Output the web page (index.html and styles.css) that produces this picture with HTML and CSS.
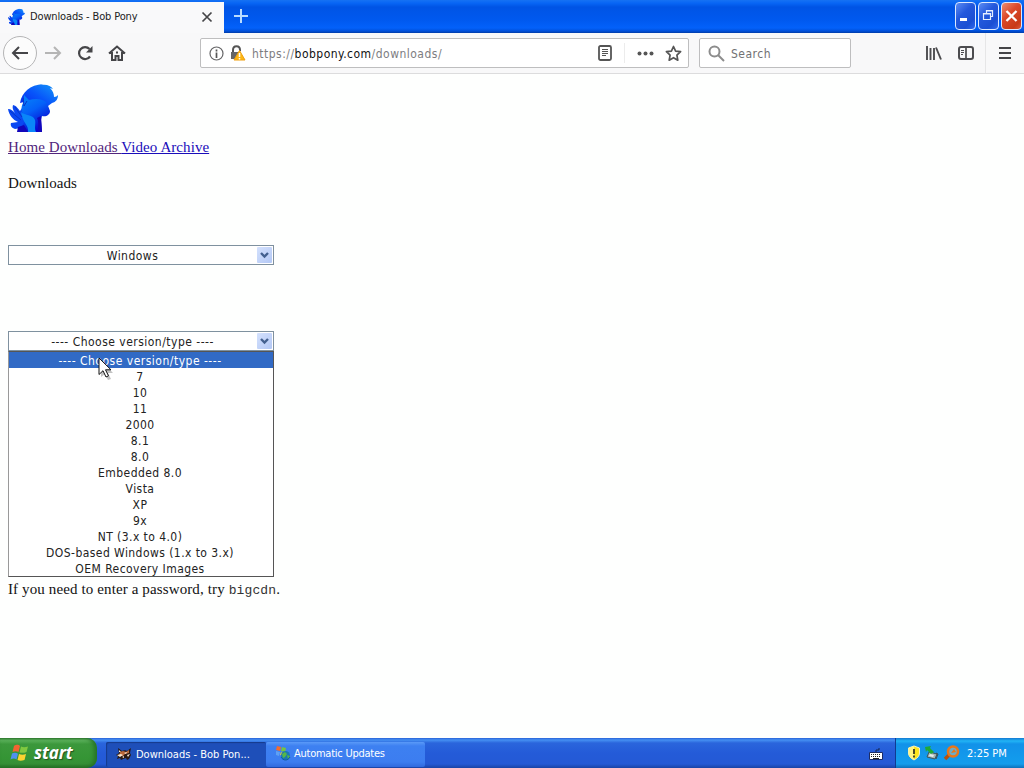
FILE: index.html
```html
<!DOCTYPE html>
<html lang="en">
<head>
    <meta charset="UTF-8">
    <meta name="viewport" content="width=device-width, initial-scale=1.0">
    <title>Downloads - Bob Pony</title>
    <link rel="stylesheet" href="styles.css">
</head>
<body>
    <svg class="defs" width="0" height="0">
        <defs>
            <linearGradient id="mane" x1="0" y1="1" x2="1" y2="0">
                <stop offset="0" stop-color="#0820e8"/>
                <stop offset=".5" stop-color="#0754fa"/>
                <stop offset="1" stop-color="#159cf8"/>
            </linearGradient>
            <linearGradient id="coat" x1="0" y1="0" x2=".5" y2="1">
                <stop offset="0" stop-color="#078af9"/>
                <stop offset=".5" stop-color="#0460f8"/>
                <stop offset="1" stop-color="#0802cf"/>
            </linearGradient>
            <symbol id="pony" viewBox="0 0 50 50">
                <path fill="url(#mane)" d="M12 21C14 10 22 3 35 2l-2 1c6-1 10 1 12 4l-3-1c3 3 4 6 4 9 2 0 3-1 4-2 0 4-2 7-6 8l-4 3-20 4-4-8z"/>
                <path fill="#0a48f2" d="M0 27c3 0 5 2 7 4-2-3-3-5-2-8 4 1 5 4 7 6l4-6 5 12-3 15H10l3-4-6 1c-3-1-5-3-4-6l7-1c-5-2-9-7-10-13z"/>
                <path fill="url(#coat)" d="M16 13l5 5c7-2 15-1 18 3l3 8c0 4-4 6-8 5l-1 4 1 12H11l4-8c4-4 2-8-1-12-1-5 0-8 2-10z"/>
                <path fill="#0a86f8" d="M13 30c4 4 12 2 14 8 1 4-1 8 1 12h-8c1-7-6-10-7-20z"/>
                <path fill="#1206ba" d="M29 36c2 4 1 9 1 14h4l-1-16zM10 45l6-2 4 7H9z"/>
                <path fill="none" stroke="#0636c9" d="M15 16l1 8 3-5M2 29l11 9M7 25l7 10"/>
            </symbol>
        </defs>
    </svg>

    <div class="titlebar">
        <div class="tab">
            <svg class="tab-icon" width="17" height="17"><use href="#pony"/></svg>
            <span class="tab-title">Downloads - Bob Pony</span>
            <svg width="12" height="12" viewBox="0 0 12 12"><path d="M1.5 1.5l9 9m0-9l-9 9" stroke="#454548" stroke-width="1.7"/></svg>
        </div>
        <svg class="new-tab" width="14" height="14" viewBox="0 0 14 14"><path d="M7 0v14M0 7h14" stroke="#b9dcff" stroke-width="2"/></svg>
        <div class="window-buttons">
            <div class="win-button"><svg width="19" height="26"><path d="M4 16.5h7" stroke="#fff" stroke-width="3"/></svg></div>
            <div class="win-button"><svg width="19" height="26" fill="none" stroke="#e6efff"><path d="M4.5 10.500h7v6h-7zM4 11h8M7.500 10V7.500h6v6H12M7 8h7" stroke-width="1.200"/></svg></div>
            <div class="win-button close"><svg width="19" height="26"><path d="M4.500 8l10 10m0-10l-10 10" stroke="#fff" stroke-width="2.300"/></svg></div>
        </div>
    </div>

    <div class="toolbar">
        <div class="back">
            <svg width="18" height="16" viewBox="0 0 18 16" fill="none" stroke="#454548" stroke-width="2"><path d="M17 8H2M8 2L2 8l6 6"/></svg>
        </div>
        <svg class="forward" width="18" height="16" viewBox="0 0 18 16" fill="none" stroke="#b5b5b5" stroke-width="2"><path d="M1 8h15M10 2l6 6-6 6"/></svg>
        <svg class="reload" width="16" height="16" viewBox="0 0 16 16"><path d="M13 11.500A6 6 0 1 1 12.500 4" fill="none" stroke="#454548" stroke-width="2.200"/><path d="M15.500 1v6.500H9z" fill="#454548"/></svg>
        <svg class="home" width="18" height="16" viewBox="0 0 18 16"><path d="M1 8.500L9 1.500l8 7M4 7v8h3.500v-4h3v4H14V7" fill="none" stroke="#454548" stroke-width="2"/><path d="M8 6.500h2v2H8z" fill="#454548"/></svg>

        <div class="url-bar">
            <svg width="15" height="15" viewBox="0 0 15 15"><circle cx="7.500" cy="7.500" r="6.500" fill="none" stroke="#656567" stroke-width="1.200"/><path d="M7.500 6.500V12M7.500 3.500v2" stroke="#555" stroke-width="1.700"/></svg>
            <svg class="lock" width="16" height="16" viewBox="0 0 16 16"><path d="M3 8V5c0-5 7-5 7 0v1" fill="none" stroke="#555" stroke-width="2"/><path d="M1 7h8v7H1z" fill="#666"/><path d="M9.500 5.500L15 15H4z" fill="#fdb714" stroke="#ef9f10" stroke-linejoin="round"/><path d="M9.500 8v4m0 1v1.500" stroke="#fff" stroke-width="1.500"/></svg>
            <span class="url">https://<b>bobpony.com</b>/downloads/</span>
            <svg class="reader" width="14" height="16" viewBox="0 0 14 16" fill="none" stroke="#555"><rect x="1" y="1" width="12" height="14" rx="1.500" stroke-width="1.800"/><path d="M4 4.500h6M4 6.500h6M4 8.500h6M4 10.500h4"/></svg>
            <i class="divider"></i>
            <svg class="dots" width="17" height="5" viewBox="0 0 17 5" fill="#555"><circle cx="2.500" cy="2.500" r="2"/><circle cx="8.500" cy="2.500" r="2"/><circle cx="14.500" cy="2.500" r="2"/></svg>
            <svg class="star" width="17" height="17" viewBox="0 0 17 17"><path d="M8.500 1.500l2.100 4.600 5 .6-3.700 3.500.9 5-4.300-2.500-4.300 2.500.9-5-3.700-3.500 5-.6z" fill="none" stroke="#555" stroke-width="1.700" stroke-linejoin="round"/></svg>
        </div>

        <div class="search-bar">
            <svg width="17" height="17" viewBox="0 0 17 17" fill="none" stroke="#8c8c8c" stroke-width="2"><circle cx="6.500" cy="6.500" r="5"/><path d="M10 10l6 6"/></svg>
            <span class="search-text">Search</span>
        </div>

        <svg class="library" width="16" height="14" viewBox="0 0 16 14" fill="none" stroke="#4c4c4f" stroke-width="1.900"><path d="M1 0v14M4.500 2v12M8 2v12M10 1.500l5 12"/></svg>
        <svg class="sidebar" width="16" height="14" viewBox="0 0 16 14" fill="none" stroke="#4c4c4f"><rect x="1" y="1" width="14" height="12" rx="2" stroke-width="2"/><path d="M8 1v12" stroke-width="1.700"/><path d="M3 4.500h3M3 6.500h3M3 8.500h2"/></svg>
        <i class="menu-divider"></i>
        <svg class="menu" width="12" height="12" viewBox="0 0 12 12" stroke="#454548" stroke-width="2"><path d="M0 1h12M0 6h12M0 11h12"/></svg>
    </div>

    <div class="page">
        <svg class="logo" width="50" height="50"><use href="#pony"/></svg>
        <div class="links"><a class="visited" href="#">Home </a><a class="visited" href="#">Downloads </a><a href="#">Video Archive</a></div>
        <p class="heading">Downloads</p>

        <div class="select">
            <span class="value">Windows</span>
            <span class="arrow"><svg width="9" height="7" viewBox="0 0 9 7"><path d="M1 1l3.500 3.500L8 1" fill="none" stroke="#43608f" stroke-width="2.400"/></svg></span>
        </div>

        <div class="select version">
            <span class="value">---- Choose version/type ----</span>
            <span class="arrow"><svg width="9" height="7" viewBox="0 0 9 7"><path d="M1 1l3.500 3.500L8 1" fill="none" stroke="#43608f" stroke-width="2.400"/></svg></span>
            <ul class="options">
                <li class="selected">---- Choose version/type ----</li>
                <li>7</li>
                <li>10</li>
                <li>11</li>
                <li>2000</li>
                <li>8.1</li>
                <li>8.0</li>
                <li>Embedded 8.0</li>
                <li>Vista</li>
                <li>XP</li>
                <li>9x</li>
                <li>NT (3.x to 4.0)</li>
                <li>DOS-based Windows (1.x to 3.x)</li>
                <li>OEM Recovery Images</li>
            </ul>
            <svg class="cursor" width="16" height="24" viewBox="0 0 16 24"><path d="M3 3v17l4-3 3 6 3-1-3-6h5z" fill="#777" opacity=".45"/><path d="M1 1v16.500l4-3.800 3 6.300 2.500-1.200-3-6H13z" fill="#fff" stroke="#111"/></svg>
        </div>

        <p class="password">If you need to enter a password, try <code>bigcdn</code>.</p>
    </div>

    <div class="taskbar">
        <div class="start">
            <svg width="20" height="20" viewBox="0 0 20 20"><path d="M4 3c3-2 5-1 6 0L8.500 9c-2-1-4-1-6 0z" fill="#f36431"/><path d="M11 3.500c2 1 4 1 7 0L16.500 9c-2 1-5 1-7 .5z" fill="#80c840"/><path d="M2 10.500c2-1 4-1 6 .200L6.500 16.500c-2-1.500-4-1-6 0z" fill="#4f91ee"/><path d="M9 11c2 1 5 1 7 0l-1.500 6c-3 1-5 1-7 0z" fill="#fbd331"/></svg>
            <span>start</span>
        </div>
        <div class="task active">
            <svg width="16" height="16" viewBox="0 0 16 16"><path d="M2 2l4 3c2-1 4-1 5 0l4-3-1 5 1 2-2 4-2 1-1-2-3 1-2 1-1-2-3 1 1-3-2-1 3-2z" fill="#2a1a14"/><path d="M4 6l3-1 3 1 3-2 0 3-4 1-2 2-4 0z" fill="#b9683a"/><path d="M1 9l4-1 2 1-3 2zM8 7l3-1-1 2zM3 4l2 2H3zM11 9l3-1-2 3zM6 11l2-1v2z" fill="#f7e6d4"/></svg>
            <span>Downloads - Bob Pon...</span>
        </div>
        <div class="task updates">
            <svg width="16" height="16" viewBox="0 0 16 16"><path d="M2 1l4 1-1 4-4-1z" fill="#f36b2e"/><path d="M7 2l4 1-1 4-4-1z" fill="#76c442"/><path d="M1 6l4 1-1 4-3-1z" fill="#5da0f5"/><path d="M6 7l4 1-1 3-4-1z" fill="#f5cd33"/><circle cx="10.500" cy="10.500" r="4.500" fill="#1b79b0"/><path d="M7 9l3-2 2 2-2 3-2 1zM12 10l3 1-2 3z" fill="#55b747"/><path d="M6 12c2 4 7 4 9 0" fill="none" stroke="#135a9c"/></svg>
            <span>Automatic Updates</span>
        </div>
        <svg class="keyboard" width="14" height="14" viewBox="0 0 14 14"><path d="M7 5V3h3V1" fill="none" stroke="#17264f"/><path d="M.500 5.500h13v7H.500z" fill="#fff" stroke="#1b2c66"/><path d="M2 7.500h10M2 9.500h10" stroke="#222" stroke-dasharray="1 1"/><path d="M4 11.500h6" stroke="#222"/></svg>
        <div class="tray">
            <svg width="14" height="16" viewBox="0 0 14 16"><path d="M7 1l5.500 2v5c0 3-2 5-5.500 7-3.500-2-5.500-4-5.500-7V3z" fill="#fde51d" stroke="#f0f0cf"/><path d="M7 1v14c-3.500-2-5.500-4-5.500-7V3z" fill="#fff481"/><path d="M7 4v5m0 1.500v2" stroke="#4b4b27" stroke-width="2"/></svg>
            <svg width="16" height="16" viewBox="0 0 16 16"><path d="M5 7l8 2-2 5-8-2z" fill="#a9b5b5" stroke="#3c5558"/><path d="M6 9l4 1-1 2-4-1z" fill="#e5eeea"/><path d="M1 2l6-1-1 2 4 4-3 2-4-4-1 2z" fill="#20a935"/><path d="M12 8l2 1-2 5" fill="none" stroke="#424b4b"/></svg>
            <svg width="17" height="16" viewBox="0 0 17 16"><path d="M7 9l-5 5" stroke="#b6510d" stroke-width="3.500"/><circle cx="10" cy="6.500" r="5" fill="#6cacc8" stroke="#e87719" stroke-width="2.500"/><path d="M8 8l3-4 2 3z" fill="#e87719"/></svg>
            <span class="clock">2:25 PM</span>
        </div>
    </div>
</body>
</html>
```

FILE: styles.css
```css
* {
    box-sizing: border-box;
}
body {
    width: 1024px;
    height: 768px;
    margin: 0;
    overflow: hidden;
    display: flex;
    flex-direction: column;
    background: #fefffe;
    color: #222;
    font-family: "DejaVu Sans Condensed", "DejaVu Sans", sans-serif;
    font-size: 12px;
}
svg {
    display: block;
    flex-shrink: 0;
}
.defs {
    position: absolute;
}

/* title bar */
.titlebar {
    height: 33px;
    flex-shrink: 0;
    display: flex;
    background: linear-gradient(#1672f3 0, #0866f5 3px, #0054e5 7px, #0059ef 20px, #0361fa 28px, #0050da 31px, #003ba8 33px);
}
.tab {
    width: 224px;
    height: 31px;
    margin-top: 2px;
    padding: 0 11px 2px 8px;
    display: flex;
    align-items: center;
    background: #f9f9fa;
}
.tab-icon {
    margin-right: 5px;
}
.tab-title {
    flex: 1;
    font-size: 11px;
    letter-spacing: -0.14px;
    white-space: nowrap;
}
.new-tab {
    margin: 9px 0 0 10px;
}
.window-buttons {
    display: flex;
    gap: 2px;
    margin: 2px 2px 0 auto;
}
.win-button {
    width: 21px;
    height: 28px;
    border: 1px solid #dce9ff;
    border-radius: 4px;
    background: linear-gradient(135deg, #5c8cf3, #2358dc 40%, #1b4fd3 75%, #316aee);
}
.win-button.close {
    background: linear-gradient(135deg, #ee8d70, #db492a 40%, #c83a18 80%, #dd5a39);
}

/* toolbar */
.toolbar {
    height: 41px;
    flex-shrink: 0;
    display: flex;
    align-items: center;
    padding: 0 13px 0 3px;
    background: #f8f8f9;
    border-bottom: 1px solid #dcdcdd;
}
.back {
    width: 34px;
    height: 34px;
    display: flex;
    align-items: center;
    justify-content: center;
    border: 1px solid #b5b5b6;
    border-radius: 50%;
    background: #fcfcfc;
}
.forward {
    margin-left: 7px;
}
.reload {
    margin-left: 15px;
}
.home {
    margin-left: 15px;
}
.url-bar, .search-bar {
    height: 30px;
    display: flex;
    align-items: center;
    background: #fff;
    border: 1px solid #bebebf;
    border-radius: 2px;
}
.url-bar {
    width: 489px;
    margin-left: 74px;
    padding: 0 6px 0 8px;
}
.lock {
    margin-left: 6px;
}
.url {
    margin: 1px 0 0 6px;
    color: #7d7d7f;
    font-size: 12px;
    letter-spacing: 0.48px;
}
.url b {
    color: #111;
    font-weight: normal;
}
.reader {
    margin-left: auto;
}
.divider {
    width: 1px;
    height: 20px;
    margin: 0 12px;
    background: #ececec;
}
.star {
    margin-left: 11px;
}
.search-bar {
    width: 152px;
    margin-left: 10px;
    padding-left: 8px;
}
.search-text {
    margin: 1px 0 0 6px;
    color: #717173;
    letter-spacing: 0.5px;
}
.library {
    margin-left: auto;
}
.sidebar {
    margin-left: 16px;
}
.menu-divider {
    width: 1px;
    height: 40px;
    margin: 0 13px 0 11px;
    background: #e6e6e7;
}

/* page */
.page {
    flex: 1;
    padding: 8px;
    color: #111;
    font-family: "Liberation Serif", serif;
    font-size: 15px;
    letter-spacing: 0.07px;
}
.links {
    height: 18px;
    margin-top: 6px;
    line-height: 18px;
    white-space: pre;
}
.links a {
    color: #1a0dba;
}
.links .visited {
    color: #51257c;
}
.heading {
    margin: 18px 0 53px;
    line-height: 18px;
}
.select {
    position: relative;
    width: 266px;
    height: 20px;
    padding: 1px;
    display: flex;
    align-items: center;
    border: 1px solid #7f919f;
    background: #fff;
    color: #222;
    font-family: "DejaVu Sans Condensed", "DejaVu Sans", sans-serif;
    font-size: 12px;
    letter-spacing: 0.48px;
}
.value {
    flex: 1;
    padding: 1px 2px 0 0;
    text-align: center;
}
.arrow {
    width: 15px;
    height: 16px;
    display: flex;
    align-items: center;
    justify-content: center;
    border-radius: 1px;
    background: linear-gradient(135deg, #d4e1fd, #b3c8f5);
}
.version {
    margin-top: 66px;
}
.options {
    position: absolute;
    top: 19px;
    left: -1px;
    width: 266px;
    height: 226px;
    margin: 0;
    padding: 0;
    border: 1px solid #555;
    border-left-color: #999;
    background: #fff;
    list-style: none;
    letter-spacing: 0.44px;
}
.options li {
    height: 16px;
    line-height: 18px;
    text-align: center;
    padding-right: 2px;
}
.options .selected {
    background: #316ac5;
    color: #fff;
    letter-spacing: 0.5px;
}
.cursor {
    position: absolute;
    left: 89px;
    top: 25px;
}
.password {
    margin: 229px 0 0;
    line-height: 18px;
    letter-spacing: 0.12px;
}
.password code {
    color: #333;
    font-family: "Liberation Mono", monospace;
    font-size: 13px;
}

/* taskbar */
.taskbar {
    height: 30px;
    flex-shrink: 0;
    display: flex;
    align-items: center;
    color: #fff;
    font-size: 11px;
    background: linear-gradient(#2862d8 0, #4590f2 2px, #2a65dc 5px, #245bd8 15px, #2459d5 26px, #1943a5 30px);
}
.start {
    width: 97px;
    height: 30px;
    padding-left: 10px;
    display: flex;
    align-items: center;
    gap: 4px;
    border-radius: 0 10px 10px 0;
    background: linear-gradient(#347a34 0, #60b660 2px, #3c983c 6px, #359535 20px, #368f36 26px, #236e23 30px);
    box-shadow: inset -3px 0 4px #267326;
}
.start span {
    font-family: "Open Sans", sans-serif;
    font-size: 17px;
    font-style: italic;
    font-weight: bold;
    line-height: 26px;
    letter-spacing: -0.1px;
    text-shadow: 1px 1px 1px #21521f;
}
.task {
    width: 159px;
    height: 25px;
    margin-top: 2px;
    padding-left: 10px;
    display: flex;
    align-items: center;
    gap: 3px;
    border-radius: 2px;
    white-space: nowrap;
    background: linear-gradient(#5a9af8, #3d80f1 4px, #3c7df0 20px, #3069dd);
}
.task.active {
    width: 160px;
    margin-left: 9px;
    gap: 4px;
    background: #1e4fb9;
    box-shadow: inset 1px 1px 1px #163a8b;
}
.updates {
    padding: 0 0 2px 9px;
    letter-spacing: -0.25px;
}
.keyboard {
    margin: 1px 12px 0 auto;
}
.tray {
    width: 129px;
    height: 30px;
    padding: 0 0 0 11px;
    display: flex;
    align-items: center;
    gap: 3px;
    border-left: 1px solid #103b91;
    background: linear-gradient(#1379d2 0, #21b4f5 3px, #1292e9 6px, #129aec 20px, #159cec 26px, #0e70b9 30px);
}
.clock {
    margin-left: 4px;
    white-space: nowrap;
}
```
